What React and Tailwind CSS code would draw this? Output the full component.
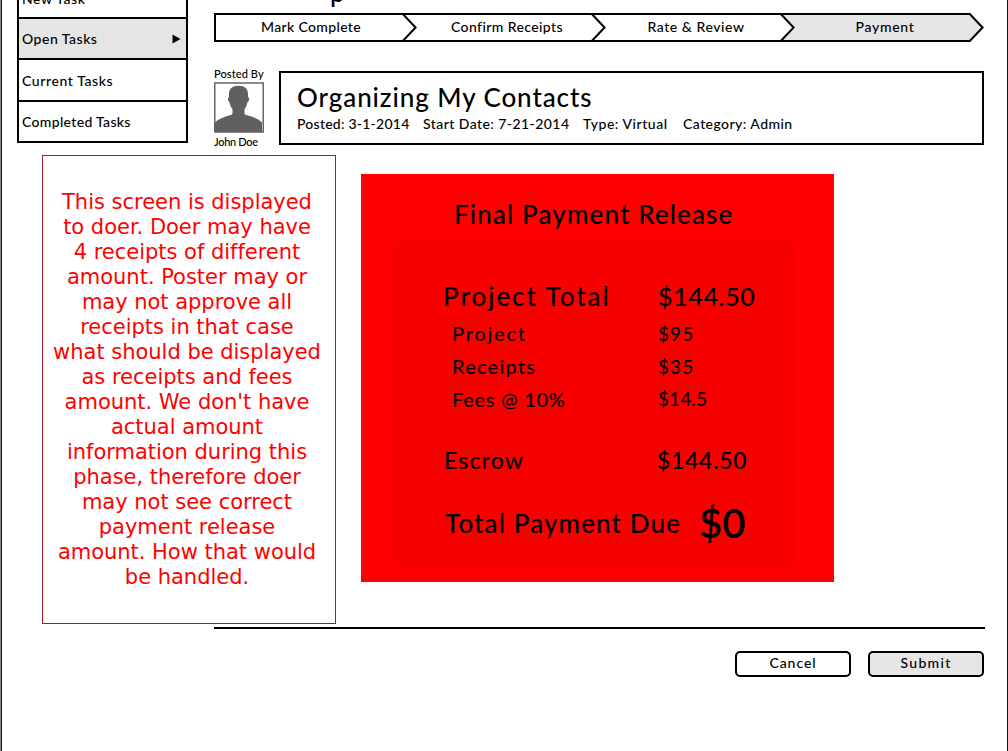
function MenuItem({ children, className = "" }) {
  return <div className={"flex items-center border-b-2 border-black pl-[3px] text-[14px] leading-[20px] " + className}>{children}</div>;
}

function Step({ label, active, first, textClass }) {
  return (
    <div className={"relative flex h-[29px] w-[189px] items-center justify-center border-y-2 border-black pb-[2px] text-[14px] " + (active ? "bg-[#e5e5e5] " : "bg-white ") + (first ? "border-l-2" : "")}>
      <span className={textClass}>{label}</span>
      <svg className="absolute -top-[2px] -right-[15px] z-10" width="16" height="29" viewBox="0 0 16 29">
        <path d="M0 1 H0.8 L13.6 14.5 L0.8 28 H0 Z" fill={active ? "#e5e5e5" : "#fff"} />
        <path d="M0 1 H0.8 L13.6 14.5 L0.8 28 H0" fill="none" stroke="#000" strokeWidth="2" />
      </svg>
    </div>
  );
}

function AmountRow({ label, amount, className, labelClass, amountClass = "" }) {
  return (
    <div className={"flex items-center " + className}>
      <span className={"shrink-0 " + labelClass}>{label}</span>
      <span className={"shrink-0 " + amountClass}>{amount}</span>
    </div>
  );
}

const noteLines = [
  "This screen is displayed",
  "to doer. Doer may have",
  "4 receipts of different",
  "amount. Poster may or",
  "may not approve all",
  "receipts in that case",
  "what should be displayed",
  "as receipts and fees",
  "amount. We don't have",
  "actual amount",
  "information during this",
  "phase, therefore doer",
  "may not see correct",
  "payment release",
  "amount. How that would",
  "be handled.",
];

export default function App() {
  return (
    <div className="h-[751px] w-[1008px] overflow-hidden border-l border-[#8c8c8c] bg-white font-['Lato',sans-serif] font-medium text-black">
      <div className="h-full overflow-hidden border-x border-[#111]">
        <div className="flex h-[155px] pl-[15px]">
          <aside className="h-[143px] w-[171px] border-x-2 border-black">
            <MenuItem className="h-[19px] overflow-hidden tracking-[0.6px]"><span className="-mt-[19px]">New Task</span></MenuItem>
            <MenuItem className="h-[41px] justify-between bg-[#e5e5e5] pr-[5px] tracking-[0.5px]">
              <span>Open Tasks</span>
              <svg width="9" height="10" viewBox="0 0 9 10"><path d="M0.5 0.5 L8.5 5 L0.5 9.5 Z" /></svg>
            </MenuItem>
            <MenuItem className="h-[42px] pt-[2px] tracking-[0.6px]"><span>Current Tasks</span></MenuItem>
            <MenuItem className="h-[41px] tracking-[0.33px]"><span>Completed Tasks</span></MenuItem>
          </aside>

          <main className="ml-[26px] w-[771px]">
            <div className="h-[13px] overflow-hidden pl-[116px]">
              <h1 className="-mt-[20px] text-[26px] leading-[24px]">p</h1>
            </div>
            <div className="flex">
              <Step label="Mark Complete" first textClass="pl-[3px] tracking-[0.35px]" />
              <Step label="Confirm Receipts" textClass="pl-[19px] tracking-[0.4px]" />
              <Step label="Rate & Review" textClass="pl-[19px] tracking-[0.56px]" />
              <Step label="Payment" active textClass="pl-[19px] tracking-[0.7px]" />
            </div>
            <div className="mt-[25px] flex">
              <div className="w-[65px] whitespace-nowrap">
                <div className="text-[11px] leading-[14px] tracking-[0.1px]">Posted By</div>
                <svg className="mt-[1px] block" width="50" height="51" viewBox="0 0 50 51">
                  <rect x="0.75" y="1" width="48.5" height="49" fill="#fff" stroke="#666" strokeWidth="1.5" />
                  <path d="M1 50 V40.500 C5 36.500 11 34.500 15 33.500 C17.500 33 18.500 32.500 18.500 31 V27 C17 25.500 16 23.500 15.700 20.500 C14 20 13.200 15.500 15 15 C14.300 7 17.500 3.700 24.500 3.700 C31.500 3.700 34.700 7 34 15 C35.800 15.500 35 20 33.300 20.500 C33 23.500 32 25.500 30.500 27 V31 C30.500 32.500 31.500 33 34 33.500 C38 34.500 44 36.500 48 40.500 V50 Z" fill="#606060" />
                </svg>
                <div className="text-[11px] leading-[18px] tracking-[-0.3px]">John Doe</div>
              </div>
              <div className="mt-[4px] h-[74px] w-[705px] border-2 border-black pt-[8px] pl-[16px]">
                <h2 className="text-[26px] leading-[32px] tracking-[0.92px]">Organizing My Contacts</h2>
                <div className="mt-[1px] flex text-[14px] leading-[20px] whitespace-nowrap">
                  <span className="w-[126px] tracking-[0.24px]">Posted: 3-1-2014</span>
                  <span className="w-[160px] tracking-[0.44px]">Start Date: 7-21-2014</span>
                  <span className="w-[100px] tracking-[0.55px]">Type: Virtual</span>
                  <span className="tracking-[0.45px]">Category: Admin</span>
                </div>
              </div>
            </div>
          </main>
        </div>

        <div className="flex items-start pl-[40px]">
          <div className="h-[469px] w-[294px] border border-[#a51c24] pt-[34px] pr-[4px] text-center font-['DejaVu_Sans',sans-serif] text-[21px] leading-[25px] font-normal tracking-[-0.02px] whitespace-nowrap text-[#ff0000]">
            {noteLines.map((line) => <div key={line}>{line}</div>)}
          </div>
          <section className="mt-[19px] ml-[25px] h-[408px] w-[473px] bg-[#ff0000] pt-[20px] pl-[33px] whitespace-nowrap">
            <h2 className="pl-[60px] text-[26px] leading-[40px] tracking-[1.13px]">Final Payment Release</h2>
            <div className="mt-[6px] h-[326px] w-[401px] rounded-[6px] bg-[#f70000] pt-[36px] pl-[49px]">
              <AmountRow label="Project Total" amount="$144.50" className="h-[40px]" labelClass="w-[215px] text-[26px] tracking-[1.94px]" amountClass="pt-[1px] text-[25px] tracking-[0.65px]" />
              <AmountRow label="Project" amount="$95" className="h-[33px] pl-[9px]" labelClass="w-[206px] text-[20px] tracking-[1.74px]" amountClass="pt-[4px] text-[19px] tracking-[1.1px]" />
              <AmountRow label="Receipts" amount="$35" className="h-[33px] pl-[9px]" labelClass="w-[206px] text-[20px] tracking-[1.22px]" amountClass="pt-[4px] text-[19px] tracking-[1.1px]" />
              <AmountRow label="Fees @ 10%" amount="$14.5" className="h-[33px] pl-[9px]" labelClass="w-[206px] text-[20px] tracking-[0.72px]" amountClass="pt-[1px] text-[19px] tracking-[0.1px]" />
              <AmountRow label="Escrow" amount="$144.50" className="mt-[25px] h-[40px]" labelClass="w-[214px] pl-[1px] text-[23px] tracking-[1.17px]" amountClass="text-[23px] tracking-[0.7px]" />
              <AmountRow label="Total Payment Due" amount="$0" className="mt-[18px] h-[50px]" labelClass="w-[256px] pt-[1px] pl-[2px] text-[26px] tracking-[1.13px]" amountClass="text-[40px] font-semibold" />
            </div>
          </section>
        </div>

        <div className="mt-[3px] ml-[212px] w-[771px]">
          <hr className="border-t-2 border-black" />
          <div className="mt-[22px] flex justify-end gap-[17px] pr-[1px] text-[14px] leading-[20px]">
            <button className="h-[26px] w-[116px] rounded-[5px] border-2 border-black bg-white pb-[2px] tracking-[0.95px]">Cancel</button>
            <button className="h-[26px] w-[116px] rounded-[5px] border-2 border-black bg-[#e5e5e5] pb-[2px] tracking-[1.3px]">Submit</button>
          </div>
        </div>
      </div>
    </div>
  );
}
